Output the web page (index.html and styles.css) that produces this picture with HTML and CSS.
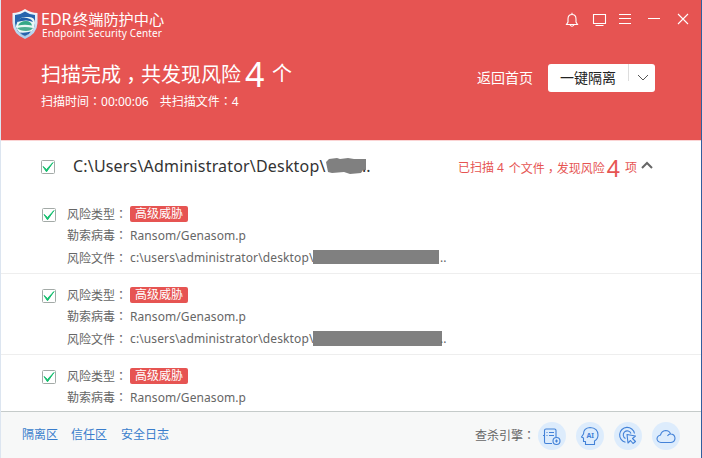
FILE: index.html
```html
<!DOCTYPE html>
<html lang="zh-CN">
<head>
<meta charset="utf-8">
<title>EDR终端防护中心</title>
<link rel="stylesheet" href="styles.css">
</head>
<body>
<div class="window">
  <header class="header">
    <div class="topbar">
      <svg class="logo" width="28" height="32" viewBox="0 0 28 32">
        <defs><linearGradient id="rim" x1="0" y1="0" x2="0" y2="1"><stop offset="0" stop-color="#f4fbff"/><stop offset="1" stop-color="#a9cdec"/></linearGradient></defs>
        <path d="M14 1Q20 5 26.500 5V15Q26 26 14 31Q2 26 1.500 15V5Q8 5 14 1Z" fill="url(#rim)"/>
        <path d="M14 3.500Q19 7 24 7V15Q23.500 24 14 28.500Q4.500 24 4 15V7Q9 7 14 3.500Z" fill="#2865ad"/>
        <path d="M5 18Q7 8 16 9Q24 8 24 15Q23 25 14 28.500Q7 25 5 19Z" fill="#eaf8f5"/>
        <path d="M6 14Q9 8 16 10Q21 11 22 14Q16 11 6 14Z" fill="#235fa9"/>
        <path d="M7 17.500Q9 13 15 13Q20 13 21 17.500Q14 16 7 17.500Z" fill="#35a887"/>
        <path d="M6 20Q14 18 22 20Q20 23 15 23Q9 23 6 20Z" fill="#4dae92"/>
        <path d="M9 24.500Q15 25 20 23.500Q18 27 14 28Q11 27 9 24.500Z" fill="#2865ad"/>
      </svg>
      <div class="brand"><div class="name"><span class="edr">EDR</span>终端防护中心</div><div class="sub">Endpoint Security Center</div></div>
      <svg class="controls" width="126" height="16" viewBox="0 0 126 16">
        <path d="M1.500 12.500H12.500L11 10V7Q11 2.500 7 2.500Q3 2.500 3 7V10ZM7 .8V2.500M5 13Q7 15.500 9 13"/>
        <path d="M28.500 2.500H40.500V11.500H28.500ZM30.500 13.500H38.500"/>
        <path d="M54 2.500H66M54 6.500H66M54 11.500H66"/>
        <path d="M83 6.500H95M113 2L123 12M123 2L113 12"/>
      </svg>
    </div>
    <div class="summary">
      <div class="result">
        <div class="headline"><span>扫描完成<span class="comma" lang="zh-TW">，</span>共发现风险</span><span class="count">4</span><span>个</span></div>
        <div class="meta"><span class="time">扫描时间<span class="colon" lang="zh-TW">：</span>00:00:06</span><span>共扫描文件<span class="colon" lang="zh-TW">：</span>4</span></div>
      </div>
      <a class="home">返回首页</a>
      <div class="button"><span class="action">一键隔离</span><span class="drop"><svg width="12" height="8" viewBox="0 0 12 8"><path d="M1 1L6 6L11 1" fill="none" stroke="#555"/></svg></span></div>
    </div>
  </header>
  <main class="list">
    <div class="group">
      <svg class="check" width="14" height="14" viewBox="0 0 14 14"><rect x=".5" y=".5" width="13" height="13" rx="1"/><path d="M2 6.500L5.500 9.500L12 2.500L5.500 11.800Z"/></svg>
      <span class="path">C:\Users\Administrator\Desktop\</span>
      <svg class="mask" width="40" height="16" viewBox="0 0 40 16"><path d="M0 4L3 1L11 0L14 1L22 0L28 1H40V12H37L35 15L24 16L18 14L6 15L2 14Z" fill="#808080"/></svg><span class="dots">..</span>
      <span class="found"><span>已扫描</span><span class="scanned">4</span><span>个文件<span class="comma" lang="zh-TW">，</span>发现风险</span><b>4</b><span>项</span><svg width="14" height="9" viewBox="0 0 14 9"><path d="M2 7L7 2L12 7" fill="none" stroke="#666" stroke-width="2"/></svg></span>
    </div>
    <section class="item">
      <svg class="check" width="14" height="14" viewBox="0 0 14 14"><rect x=".5" y=".5" width="13" height="13" rx="1"/><path d="M2 6.500L5.500 9.500L12 2.500L5.500 11.800Z"/></svg>
      <div class="fields">
        <div class="row"><label>风险类型<span class="colon" lang="zh-TW">：</span></label><span class="tag">高级威胁</span></div>
        <div class="row"><label>勒索病毒<span class="colon" lang="zh-TW">：</span></label><span class="virus">Ransom/Genasom.p</span></div>
        <div class="row last"><label>风险文件<span class="colon" lang="zh-TW">：</span></label><span class="file">c:\users\administrator\desktop\</span><i class="redact"></i><span class="tail">..</span></div>
      </div>
    </section>
    <section class="item">
      <svg class="check" width="14" height="14" viewBox="0 0 14 14"><rect x=".5" y=".5" width="13" height="13" rx="1"/><path d="M2 6.500L5.500 9.500L12 2.500L5.500 11.800Z"/></svg>
      <div class="fields">
        <div class="row"><label>风险类型<span class="colon" lang="zh-TW">：</span></label><span class="tag">高级威胁</span></div>
        <div class="row"><label>勒索病毒<span class="colon" lang="zh-TW">：</span></label><span class="virus">Ransom/Genasom.p</span></div>
        <div class="row last"><label>风险文件<span class="colon" lang="zh-TW">：</span></label><span class="file">c:\users\administrator\desktop\</span><i class="redact wide"></i><span class="tail">..</span></div>
      </div>
    </section>
    <section class="item">
      <svg class="check" width="14" height="14" viewBox="0 0 14 14"><rect x=".5" y=".5" width="13" height="13" rx="1"/><path d="M2 6.500L5.500 9.500L12 2.500L5.500 11.800Z"/></svg>
      <div class="fields">
        <div class="row"><label>风险类型<span class="colon" lang="zh-TW">：</span></label><span class="tag">高级威胁</span></div>
        <div class="row"><label>勒索病毒<span class="colon" lang="zh-TW">：</span></label><span class="virus">Ransom/Genasom.p</span></div>
      </div>
    </section>
  </main>
  <footer class="footer">
    <a>隔离区</a><a>信任区</a><a>安全日志</a>
    <span class="engines">查杀引擎<span class="colon" lang="zh-TW">：</span></span>
    <svg class="engine" width="28" height="28" viewBox="0 0 28 28"><circle class="disc" cx="14" cy="14" r="14"/><path d="M14 21.500H8Q6.500 21.500 6.500 20V8.500Q6.500 7 8 7H16.500Q18 7 18 8.500V15M8.500 10.500H9.500M11 10.500H16M8.500 13.500H9.500M11 13.500H16M5 13.500H7"/><circle cx="18.500" cy="19" r="3.500"/><path d="M17 19H20M18.500 17.500V20.500"/></svg>
    <svg class="engine" width="28" height="28" viewBox="0 0 28 28"><circle class="disc" cx="14" cy="14" r="14"/><path d="M9.500 22.500V19.500H7.500V16L5.500 15L7.500 12Q7.500 6 14 5.500Q22 6 22 13Q22 17 18.500 19V22.500Z"/><text x="10.500" y="16">AI</text></svg>
    <svg class="engine" width="28" height="28" viewBox="0 0 28 28"><circle class="disc" cx="14" cy="14" r="14"/><path d="M11.500 20.200A7.500 7.500 0 1 1 20.500 11.500M11.500 16.500A4 4 0 1 1 17 11.500M13 12.500L21.500 14L18.500 16.500L21.500 19.500L19 21.500L16.500 18.500L14 21Z"/></svg>
    <svg class="engine" width="28" height="28" viewBox="0 0 28 28"><circle class="disc" cx="14" cy="14" r="14"/><path d="M9 20.500Q5.500 20 5 17Q5 14 8.500 13Q9.500 9 13.500 8.500Q17.500 8.500 18.500 12Q22.500 12 23 16Q23 20 19 20.500ZM18.500 12Q16.500 12 15.500 14"/></svg>
  </footer>
</div>
</body>
</html>
```
FILE: styles.css
```css
* { box-sizing: border-box; }
body { margin: 0; background: #fff; font: 12px/20px "Noto Sans", "Noto Sans CJK SC", sans-serif; color: #666; white-space: nowrap; overflow: hidden; }
.window { width: 702px; height: 458px; display: flex; flex-direction: column; border-left: 1px solid #dce5f0; border-right: 1px solid #315e9e; }
.header { height: 140px; flex: none; background: #e65452; color: #fff; }
.topbar { display: flex; height: 56px; padding: 8px 10px 0 10px; align-items: flex-start; }
.brand { margin-left: 2px; padding-top: 1px; }
.name { height: 17px; font-size: 15.200px; line-height: 20px; }
.edr { display: inline-block; width: 32px; font-size: 16px; }
.sub { font-size: 10px; line-height: 14px; padding-left: 1px; letter-spacing: .14px; }
.controls { margin: 4px 0 0 auto; fill: none; stroke: #fff; stroke-width: 1.100; }
.summary { display: flex; padding: 0 46px 0 40px; }
.headline { display: flex; height: 36px; align-items: center; font-size: 20px; line-height: 36px; }
.count { font-size: 34px; width: 31px; padding-left: 4px; }
.comma { font-family: "Noto Sans CJK TC", sans-serif; position: relative; top: .3em; }
.colon { font-family: "Noto Sans CJK TC", sans-serif; }
.meta { display: flex; gap: 11px; line-height: 18px; }
.home { margin: 11px 15px 0 auto; font-size: 14px; line-height: 22px; }
.button { display: flex; width: 107px; height: 28px; margin-top: 8px; background: #fff; border-radius: 3px; color: #222; font-size: 14px; line-height: 28px; }
.action { width: 80px; padding-left: 12px; }
.drop { width: 27px; height: 17px; border-left: 1px solid #ddd; padding: 10px 0 0 8px; line-height: 0; }
.list { flex: 1; min-height: 0; overflow: hidden; background: #fff; border-top: 1px solid #fbd4d4; }
.check { flex: none; fill: none; stroke: #a3aaa7; }
.check path { fill: #16bf70; stroke: #16bf70; stroke-width: 1; }
.group { display: flex; height: 52px; align-items: center; padding-left: 40px; color: #333; }
.path { margin: -2px 0 0 18px; width: 253px; font-size: 16px; letter-spacing: .18px; }
.mask { margin-top: -2px; }
.dots { margin: -2px 0 0 -4px; font-size: 16px; }
.found { display: flex; align-items: center; margin: 2px 47px 0 auto; color: #e65452; }
.scanned { margin: 0 5px 0 3px; }
.found b { font-size: 23px; font-weight: 400; margin: -1px 5px 0 2px; }
.found svg { margin: -6px 0 0 3px; }
.item { display: flex; height: 81px; padding: 10px 0 0 40px; border-bottom: 1px solid #eee; }
.item .check { margin: 5px 0 0 1px; }
.fields { margin-left: 11px; }
.row { display: flex; height: 21px; align-items: center; }
.row:first-child { height: 22px; }
.row.last { height: 24px; }
.row label { width: 63px; }
.tag { width: 58px; height: 16px; background: #e65452; color: #fff; border-radius: 2px; line-height: 16px; text-align: center; }
.virus { letter-spacing: .08px; }
.redact { width: 126px; height: 14px; margin-top: -2px; background: #808080; }
.redact.wide { width: 129px; height: 15px; margin-right: -3px; }
.tail { padding-left: 1px; }
.file { width: 183px; letter-spacing: .12px; }
.footer { height: 47px; flex: none; display: flex; align-items: center; background: #f7f8f8; border-top: 1px solid #c5cbca; padding: 2px 21px 0 21px; }
.footer a { color: #397dcc; margin: -2px 13px 0 0; }
.footer a:nth-child(2) { margin-right: 14px; }
.engines { margin: -2px 3px 0 auto; }
.engine { margin-left: 10px; fill: none; stroke: #4382d8; stroke-width: 1.100; stroke-linejoin: round; }
.engines + .engine { margin-left: 0; }
.disc { fill: #ddecfc; stroke: none; }
.engine text { font: bold 7px "Noto Sans", sans-serif; fill: #4382d8; stroke: none; }
```
